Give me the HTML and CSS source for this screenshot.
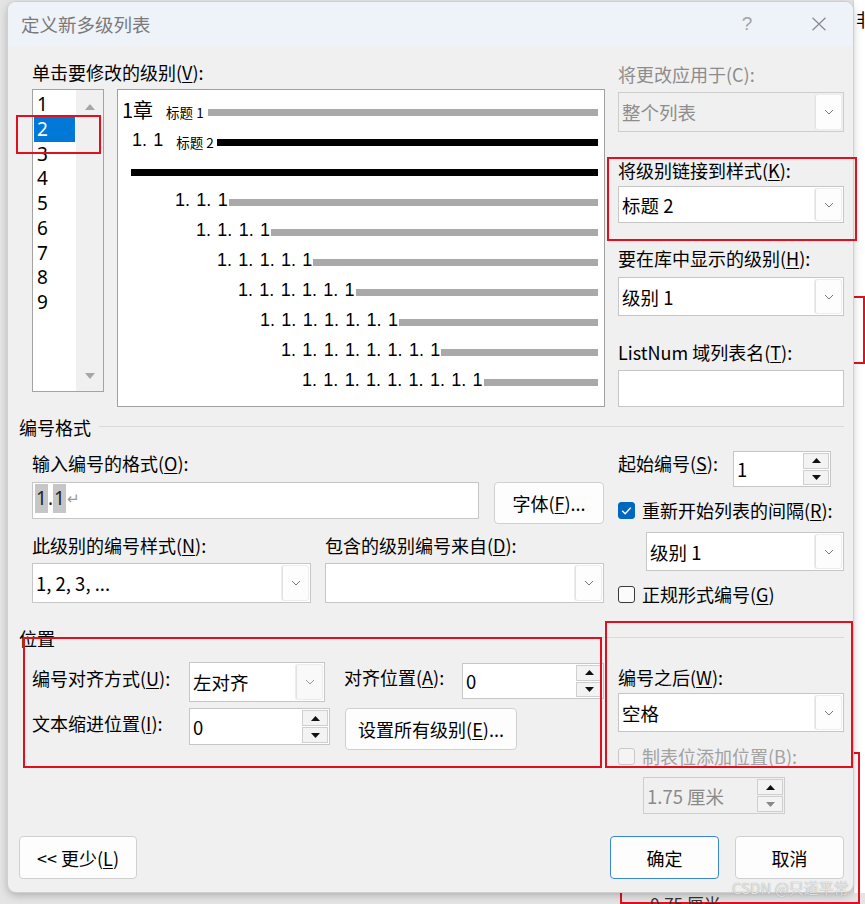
FILE: index.html
```html
<!DOCTYPE html>
<html lang="zh-CN">
<head>
<meta charset="utf-8">
<title>定义新多级列表</title>
<link rel="stylesheet" href="styles.css">
</head>
<body>
<div class="bg-right"><span class="bg-char">非</span></div>
<div class="bg-red bg-red-a"></div>
<div class="bg-red bg-red-b"></div>
<div class="bg-bottom-text">0.75 厘米</div>

<div class="dialog">
  <div class="titlebar">
    <span class="title">定义新多级列表</span>
    <span class="help">?</span>
    <span class="close"><svg width="16" height="14" viewBox="0 0 16 14"><path d="M1.5 0.8 L14.5 13.2 M14.5 0.8 L1.5 13.2" stroke="#8a8a8a" stroke-width="1.2" fill="none"/></svg></span>
  </div>

  <div class="body">
    <div class="top grid2">
      <div class="col">
        <div class="label mt15">单击要修改的级别(<u>V</u>):</div>
        <div class="level-area">
          <div class="levels">
            <ul class="level-list">
              <li>1</li><li class="sel">2</li><li>3</li><li>4</li><li>5</li><li>6</li><li>7</li><li>8</li><li>9</li>
            </ul>
            <div class="vscroll">
              <svg width="10" height="6" viewBox="0 0 10 6"><polygon points="0,6 5,0 10,6" fill="#a6a6a6"/></svg>
              <svg width="10" height="6" viewBox="0 0 10 6"><polygon points="0,0 10,0 5,6" fill="#a6a6a6"/></svg>
            </div>
          </div>
          <div class="preview">
            <div class="prow r1"><span class="chap">1章</span><span class="sty">标题 1</span><span class="bar gray"></span></div>
            <div class="prow r2"><span class="num">1. 1</span><span class="sty sty2">标题 2</span><span class="bar black"></span></div>
            <div class="prow r3"><span class="bar black"></span></div>
            <div class="prow l4"><span class="num">1. 1. 1</span><span class="bar gray nb"></span></div>
            <div class="prow l5"><span class="num">1. 1. 1. 1</span><span class="bar gray nb"></span></div>
            <div class="prow l6"><span class="num">1. 1. 1. 1. 1</span><span class="bar gray nb"></span></div>
            <div class="prow l7"><span class="num">1. 1. 1. 1. 1. 1</span><span class="bar gray nb"></span></div>
            <div class="prow l8"><span class="num">1. 1. 1. 1. 1. 1. 1</span><span class="bar gray nb"></span></div>
            <div class="prow l9"><span class="num">1. 1. 1. 1. 1. 1. 1. 1</span><span class="bar gray nb"></span></div>
            <div class="prow l10"><span class="num">1. 1. 1. 1. 1. 1. 1. 1. 1</span><span class="bar gray nb"></span></div>
          </div>
        </div>
      </div>

      <div class="col rcol">
        <div class="label dis mt17">将更改应用于(C):</div>
        <div class="select disabled h40 mt7"><span class="val">整个列表</span><span class="arrow"><svg width="10" height="6" viewBox="0 0 10 6"><polyline points="1,1 5,5 9,1" fill="none" stroke="#777" stroke-width="1"/></svg></span></div>
        <div class="label mt27">将级别链接到样式(<u>K</u>):</div>
        <div class="select h37 mt5"><span class="val">标题 2</span><span class="arrow"><svg width="10" height="6" viewBox="0 0 10 6"><polyline points="1,1 5,5 9,1" fill="none" stroke="#777" stroke-width="1"/></svg></span></div>
        <div class="label mt24">要在库中显示的级别(<u>H</u>):</div>
        <div class="select h39 mt8"><span class="val">级别 1</span><span class="arrow"><svg width="10" height="6" viewBox="0 0 10 6"><polyline points="1,1 5,5 9,1" fill="none" stroke="#777" stroke-width="1"/></svg></span></div>
        <div class="label mt25">ListNum 域列表名(<u>T</u>):</div>
        <div class="input h37 mt7"></div>
      </div>
    </div>

    <div class="group-head mt9">编号格式</div>

    <div class="grid2">
      <div class="col">
        <div class="label mt14">输入编号的格式(<u>O</u>):</div>
        <div class="row mt8">
          <div class="input fmt"><span class="hl">1</span><span class="dot">.</span><span class="hl">1</span><span class="ret">↵</span></div>
          <div class="btn font-btn">字体(<u>F</u>)...</div>
        </div>
        <div class="pair mt10">
          <div class="label">此级别的编号样式(<u>N</u>):</div>
          <div class="label">包含的级别编号来自(<u>D</u>):</div>
        </div>
        <div class="pair mt7">
          <div class="select h40"><span class="val">1, 2, 3, ...</span><span class="arrow"><svg width="10" height="6" viewBox="0 0 10 6"><polyline points="1,1 5,5 9,1" fill="none" stroke="#777" stroke-width="1"/></svg></span></div>
          <div class="select h40"><span class="val"></span><span class="arrow"><svg width="10" height="6" viewBox="0 0 10 6"><polyline points="1,1 5,5 9,1" fill="none" stroke="#777" stroke-width="1"/></svg></span></div>
        </div>
      </div>
      <div class="col">
        <div class="row mt13">
          <div class="label w115 mt1">起始编号(<u>S</u>):</div>
          <div class="spin w98 h36"><span class="val">1</span><span class="spin-btns"><span class="sbtn"><svg width="9" height="5" viewBox="0 0 9 5"><polygon points="0,5 4.5,0 9,5" fill="#111"/></svg></span><span class="sbtn"><svg width="9" height="5" viewBox="0 0 9 5"><polygon points="0,0 9,0 4.5,5" fill="#111"/></svg></span></span></div>
        </div>
        <div class="check-row mt12"><span class="cb on"><svg width="17" height="17" viewBox="0 0 17 17"><polyline points="4.2,8.8 7.2,11.8 12.8,5.6" fill="none" stroke="#fff" stroke-width="1.4"/></svg></span><span class="label">重新开始列表的间隔(<u>R</u>):</span></div>
        <div class="select h39 mt11 ind28"><span class="val">级别 1</span><span class="arrow"><svg width="10" height="6" viewBox="0 0 10 6"><polyline points="1,1 5,5 9,1" fill="none" stroke="#777" stroke-width="1"/></svg></span></div>
        <div class="check-row mt12"><span class="cb"></span><span class="label">正规形式编号(<u>G</u>)</span></div>
      </div>
    </div>

    <div class="group-head mt22">位置</div>

    <div class="grid2">
      <div class="col">
        <div class="row mt13">
          <div class="label w157 mt5">编号对齐方式(<u>U</u>):</div>
          <div class="select w136 h40 soft"><span class="val">左对齐</span><span class="arrow"><svg width="10" height="6" viewBox="0 0 10 6"><polyline points="1,1 5,5 9,1" fill="none" stroke="#999" stroke-width="1"/></svg></span></div>
          <div class="label w118 ml19 mt4">对齐位置(<u>A</u>):</div>
          <div class="spin w142 h36 mt1"><span class="val">0</span><span class="spin-btns"><span class="sbtn"><svg width="9" height="5" viewBox="0 0 9 5"><polygon points="0,5 4.5,0 9,5" fill="#111"/></svg></span><span class="sbtn"><svg width="9" height="5" viewBox="0 0 9 5"><polygon points="0,0 9,0 4.5,5" fill="#111"/></svg></span></span></div>
        </div>
        <div class="row mt6">
          <div class="label w157 mt4">文本缩进位置(<u>I</u>):</div>
          <div class="spin w141 h37"><span class="val">0</span><span class="spin-btns"><span class="sbtn"><svg width="9" height="5" viewBox="0 0 9 5"><polygon points="0,5 4.5,0 9,5" fill="#111"/></svg></span><span class="sbtn"><svg width="9" height="5" viewBox="0 0 9 5"><polygon points="0,0 9,0 4.5,5" fill="#111"/></svg></span></span></div>
          <div class="btn all-btn ml15">设置所有级别(<u>E</u>)...</div>
        </div>
      </div>
      <div class="col">
        <div class="label mt17">编号之后(<u>W</u>):</div>
        <div class="select h39 mt5"><span class="val">空格</span><span class="arrow"><svg width="10" height="6" viewBox="0 0 10 6"><polyline points="1,1 5,5 9,1" fill="none" stroke="#777" stroke-width="1"/></svg></span></div>
        <div class="check-row mt13"><span class="cb dis-cb"></span><span class="label dis2">制表位添加位置(B):</span></div>
        <div class="spin disabled w142 h37 mt10 ind25"><span class="val">1.75 厘米</span><span class="spin-btns"><span class="sbtn"><svg width="9" height="5" viewBox="0 0 9 5"><polygon points="0,5 4.5,0 9,5" fill="#111"/></svg></span><span class="sbtn"><svg width="9" height="5" viewBox="0 0 9 5"><polygon points="0,0 9,0 4.5,5" fill="#888"/></svg></span></span></div>
      </div>
    </div>

    <div class="footer">
      <div class="btn less-btn">&lt;&lt; 更少(<u>L</u>)</div>
      <div class="spacer"></div>
      <div class="btn ok-btn">确定</div>
      <div class="btn cancel-btn">取消</div>
    </div>
  </div>
</div>

<div class="mark m1"></div>
<div class="mark m2"></div>
<div class="mark m3"></div>
<div class="mark m4"></div>
<div class="watermark">CSDN @只道平常</div>
</body>
</html>
```

FILE: styles.css
```css
* { box-sizing: border-box; }
html, body { margin: 0; padding: 0; }
body {
  width: 865px;
  height: 904px;
  overflow: hidden;
  position: relative;
  padding: 2px 0 0 8px;
  background: #e4e4e4;
  font-family: "Noto Sans CJK SC", "Noto Sans", sans-serif;
  color: #000;
}

/* backdrop window pieces */
.bg-right {
  position: absolute; left: 853px; top: 0; width: 12px; height: 893px;
  background: #fff; border-left: 1px solid #d6d6d6;
}
.bg-char { position: absolute; left: 2px; top: 8px; font-size: 18px; line-height: 22px; color: #000; }
.bg-red { position: absolute; border: 2px solid #e0101e; }
.bg-red-a { left: 840px; top: 296px; width: 25px; height: 68px; }
.bg-red-b { left: 620px; top: 752px; width: 240px; height: 152px; }
.bg-bottom-text { position: absolute; left: 650px; top: 894px; font-size: 17px; line-height: 20px; color: #333; }

.dialog {
  position: relative;
  z-index: 1;
  width: 845px;
  height: 890px;
  background: #f0f0f0;
  border-radius: 8px;
  box-shadow: 0 0 0 1px #cfcfcf, 0 3px 8px rgba(0,0,0,0.25);
  display: flex;
  flex-direction: column;
  overflow: hidden;
}
.titlebar {
  height: 44px;
  flex: none;
  background: #eef2f9;
  display: flex;
  align-items: center;
  padding: 0 24px 0 13px;
}
.title { flex: 1; font-size: 18.5px; line-height: 24px; color: #7a7a7a; }
.help { width: 20px; text-align: center; font-family: "Liberation Sans", sans-serif; font-size: 19px; color: #a3a3a3; margin-right: 52px; }
.close { width: 20px; display: flex; justify-content: center; }

.body {
  flex: 1;
  display: flex;
  flex-direction: column;
  padding: 0 9px 0 24px;
}
.grid2 {
  display: grid;
  grid-template-columns: 572px 226px;
  column-gap: 14px;
  align-items: start;
}
.col { display: flex; flex-direction: column; }

.label {
  font-size: 18px;
  line-height: 22px;
  height: 22px;
  white-space: nowrap;
}
.label u, .btn u { text-underline-offset: 2px; text-decoration-thickness: 1px; }
.label.dis { color: #8c8c8c; }
.label.dis2 { color: #a2a2a2; }

.mt1 { margin-top: 1px; } .mt4 { margin-top: 4px; } .mt5 { margin-top: 5px; }
.mt6 { margin-top: 6px; } .mt7 { margin-top: 7px; } .mt8 { margin-top: 8px; }
.mt9 { margin-top: 9px; } .mt10 { margin-top: 10px; } .mt11 { margin-top: 11px; }
.mt12 { margin-top: 12px; } .mt13 { margin-top: 13px; } .mt14 { margin-top: 14px; }
.mt15 { margin-top: 15px; } .mt17 { margin-top: 17px; } .mt22 { margin-top: 22px; }
.mt24 { margin-top: 24px; } .mt25 { margin-top: 25px; } .mt27 { margin-top: 27px; }
.ml15 { margin-left: 15px; } .ml19 { margin-left: 19px; }
.ind25 { margin-left: 25px; } .ind28 { margin-left: 28px; }
.h36 { height: 36px; } .h37 { height: 37px; } .h39 { height: 39px; } .h40 { height: 40px; }
.w98 { width: 98px; } .w115 { width: 115px; flex: none; } .w118 { width: 118px; flex: none; }
.w136 { width: 136px; flex: none; } .w141 { width: 141px; flex: none; } .w142 { width: 142px; flex: none; }
.w157 { width: 157px; flex: none; }
.row { display: flex; align-items: flex-start; }
.rcol .select, .rcol .input { width: 226px; }

/* level list */
.level-area { display: flex; align-items: flex-start; gap: 13px; margin-top: 6px; }
.levels {
  width: 72px; height: 303px; flex: none;
  border: 1px solid #a3a3a3; background: #fff;
  display: flex;
}
.level-list { list-style: none; margin: 0; padding: 2px 1px 0 1px; width: 43px; }
.level-list li {
  height: 24.75px; line-height: 24.75px;
  font-size: 19px; padding-left: 3px;
  font-family: "Noto Sans", sans-serif;
}
.level-list li.sel { background: #0078d7; color: #fff; }
.vscroll {
  width: 27px; background: #f0f0f0;
  display: flex; flex-direction: column; align-items: center; justify-content: space-between;
  padding: 14px 0 12px;
}
.vscroll svg { display: block; }

/* preview */
.preview {
  width: 488px; height: 318px; flex: none;
  background: #fff; border: 1px solid #a0a0a0;
  padding-top: 5px;
}
.prow { display: flex; align-items: center; height: 30px; padding-right: 6px; }
.bar { flex: 1; height: 7px; margin-top: 5px; }
.bar.gray { background: #a9a9a9; }
.bar.black { background: #000; }
.bar.nb { margin-left: 1px; }
.chap { font-size: 20px; line-height: 24px; margin-right: 13px; }
.sty { font-size: 13.5px; line-height: 18px; margin-right: 4px; margin-top: 3px; }
.sty2 { margin-right: 3px; }
.num {
  font-family: "Liberation Sans", sans-serif;
  font-size: 18px; line-height: 22px;
  word-spacing: 1.3px; white-space: pre; color: #000;
}
.r1 { padding-left: 4px; }
.r2 { padding-left: 14px; }
.r2 .num { margin-right: 13px; }
.r3 { padding-left: 13px; }
.l4 { padding-left: 57px; }
.l5 { padding-left: 78px; }
.l6 { padding-left: 99px; }
.l7 { padding-left: 120px; }
.l8 { padding-left: 142px; }
.l9 { padding-left: 163px; }
.l10 { padding-left: 184px; }

/* controls */
.select, .input, .spin {
  display: flex; align-items: center;
  background: #fff; border: 1px solid #c6c6c6;
}
.select .val, .spin .val {
  flex: 1; padding-left: 3px;
  font-size: 18.5px; line-height: 24px; white-space: nowrap; overflow: hidden;
}
.select .arrow {
  width: 26px; align-self: stretch; margin: 2px;
  background: #fdfdfd; border-left: 1px solid #e2e2e2; border-radius: 2px;
  box-shadow: 0 0 0 1px #ececec;
  display: flex; align-items: center; justify-content: center;
}
.select.disabled { background: #f0f0f0; border-color: #cdcdcd; }
.select.disabled .val { color: #8d8d8d; }
.select.soft .arrow { background: #f9f9f9; }
.spin .spin-btns {
  width: 26px; align-self: stretch; margin: 1px;
  display: flex; flex-direction: column; gap: 1px;
}
.sbtn {
  flex: 1; background: #f3f3f3; border: 1px solid #cfcfcf;
  display: flex; align-items: center; justify-content: center;
}
.spin.disabled { background: #f0f0f0; border-color: #cdcdcd; }
.spin.disabled .val { color: #8a8a8a; }

.input.fmt {
  width: 447px; height: 37px; flex: none;
  align-items: flex-start; padding: 1px 0 0 2px;
  font-family: "Noto Sans", sans-serif; font-size: 19px;
}
.hl { background: #c6c6c6; height: 29px; line-height: 29px; padding: 0 1px; color: #222; }
.dot { line-height: 29px; color: #222; }
.ret { line-height: 29px; color: #9a9a9a; font-size: 15px; margin-left: 1px; }

.btn {
  display: flex; align-items: center; justify-content: center;
  background: #fdfdfd; border: 1px solid #d0d0d0; border-radius: 4px;
  font-size: 18px; line-height: 24px; white-space: nowrap;
}
.font-btn { width: 110px; height: 42px; margin-left: 15px; }
.all-btn { width: 172px; height: 42px; }

.pair { display: grid; grid-template-columns: 279px 279px; column-gap: 14px; }

.check-row { display: flex; align-items: center; gap: 7px; height: 22px; }
.cb {
  width: 17px; height: 17px; flex: none;
  border: 1px solid #3a3a3a; border-radius: 3px; background: #fbfbfb;
}
.cb.on { background: #0067c0; border-color: #0067c0; display: flex; }
.cb.on svg { display: block; margin: -1px; }
.cb.dis-cb { border-color: #c8c8c8; background: #f4f4f4; }

.group-head {
  display: flex; align-items: center;
  margin-left: -13px;
  font-size: 18px; line-height: 22px; height: 22px;
}
.group-head::after {
  content: ""; flex: 1; height: 1px; background: #dadada; margin-left: 8px; margin-top: -2px;
}

.footer {
  margin-top: auto;
  margin-left: -13px;
  padding-bottom: 13px;
  display: flex; align-items: center;
}
.footer .btn { height: 43px; }
.less-btn { width: 118px; }
.spacer { flex: 1; }
.ok-btn { width: 109px; border-color: #3a86d0; }
.cancel-btn { width: 109px; margin-left: 16px; }

/* red annotation boxes */
.mark { position: absolute; z-index: 2; border: 2px solid #e0101e; }
.m1 { left: 16px; top: 115px; width: 85px; height: 39px; }
.m2 { left: 607px; top: 157px; width: 250px; height: 84px; }
.m3 { left: 23px; top: 637px; width: 579px; height: 131px; }
.m4 { left: 605px; top: 621px; width: 248px; height: 147px; }

.watermark {
  position: absolute; z-index: 3;
  left: 732px; top: 878px;
  font-size: 15px; line-height: 20px;
  color: rgba(255,255,255,0.75);
  text-shadow: 0 0 1px rgba(120,120,120,0.9);
  white-space: nowrap;
}
```
